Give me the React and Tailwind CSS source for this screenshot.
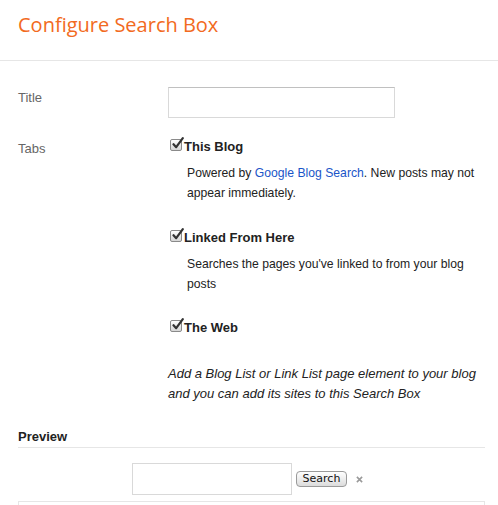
const CheckMark = () => (
  <span className="relative inline-block w-[12px] h-[12px] mt-[1px] ml-[2px] mr-[2px] shrink-0 rounded-[2px] border border-[#8a8a8a] bg-gradient-to-b from-[#ffffff] to-[#d6d6d6]">
    <svg
      viewBox="0 0 14 14"
      className="absolute -top-[3px] left-[0px] w-[14px] h-[14px]"
    >
      <path
        d="M2.5 7.2 L5.2 10.2 L11.8 1.2"
        fill="none"
        stroke="#333"
        strokeWidth="2.2"
        strokeLinecap="round"
        strokeLinejoin="round"
      />
    </svg>
  </span>
);

const TabOption = ({ label, children, className }) => (
  <div className={className}>
    <div className="flex items-start leading-[18px]">
      <CheckMark />
      <span className="font-bold text-[#222]">{label}</span>
    </div>
    {children && (
      <p className="mt-[7px] pl-[19px] text-[12.2px] leading-[20px] text-[#222]">{children}</p>
    )}
  </div>
);

export default function App() {
  return (
    <div className="w-[498px] h-[505px] overflow-hidden bg-white font-['Liberation_Sans',Arial,sans-serif] text-[13px]">
      {/* header */}
      <div className="h-[61px] border-b border-[#e6e6e6] px-[18px] pt-[10px]">
        <h1 className="font-['Open_Sans',sans-serif] text-[20px] leading-[30px] text-[#f26a21]">
          Configure Search Box
        </h1>
      </div>

      <div className="pl-[18px] pr-[13px]">
        {/* title row */}
        <div className="flex mt-[26px]">
          <label className="w-[150px] pt-[3px] leading-[16px] text-[#666]">Title</label>
          <input
            type="text"
            className="w-[227px] h-[31px] border border-[#d9d9d9] border-t-[#c0c0c0] outline-none px-1"
          />
        </div>

        {/* tabs row */}
        <div className="flex mt-[20px]">
          <div className="w-[150px] pt-[3px] leading-[16px] text-[#666]">Tabs</div>
          <div className="w-[317px]">
            <TabOption label="This Blog" className="mb-[26px]">
              Powered by{" "}
              <a href="#" className="text-[#1a55c8]">
                Google Blog Search
              </a>
              . New posts may not appear immediately.
            </TabOption>
            <TabOption label="Linked From Here" className="mb-[25px]">
              Searches the pages you've linked to from your blog posts
            </TabOption>
            <TabOption label="The Web" />
            <p className="mt-[27px] w-[312px] italic leading-[20px] text-[#222]">
              Add a Blog List or Link List page element to your blog and you can add its sites to this Search Box
            </p>
          </div>
        </div>

        {/* preview */}
        <div className="mt-[25px] border-b border-[#e6e6e6] pb-[2px]">
          <h2 className="font-bold leading-[16px] text-[#222]">Preview</h2>
        </div>
        <div className="flex items-center justify-center pr-[8px] pt-[15px] pb-[6px]">
          <input
            type="text"
            className="w-[160px] h-[32px] border border-[#d9d9d9] outline-none"
          />
          <button className="ml-[4px] h-[16px] px-[6px] rounded-[4px] border border-[#9a9a9a] bg-gradient-to-b from-[#ffffff] to-[#dcdcdc] font-['DejaVu_Sans',sans-serif] text-[11px] leading-[14px] text-[#111]">
            Search
          </button>
          <svg viewBox="0 0 8 8" className="ml-[9px] w-[7px] h-[7px]">
            <path d="M1 1 L7 7 M7 1 L1 7" stroke="#9a9a9a" strokeWidth="1.8" />
          </svg>
        </div>
        <div className="h-[20px] border border-b-0 border-[#e6e6e6]" />
      </div>
    </div>
  );
}
